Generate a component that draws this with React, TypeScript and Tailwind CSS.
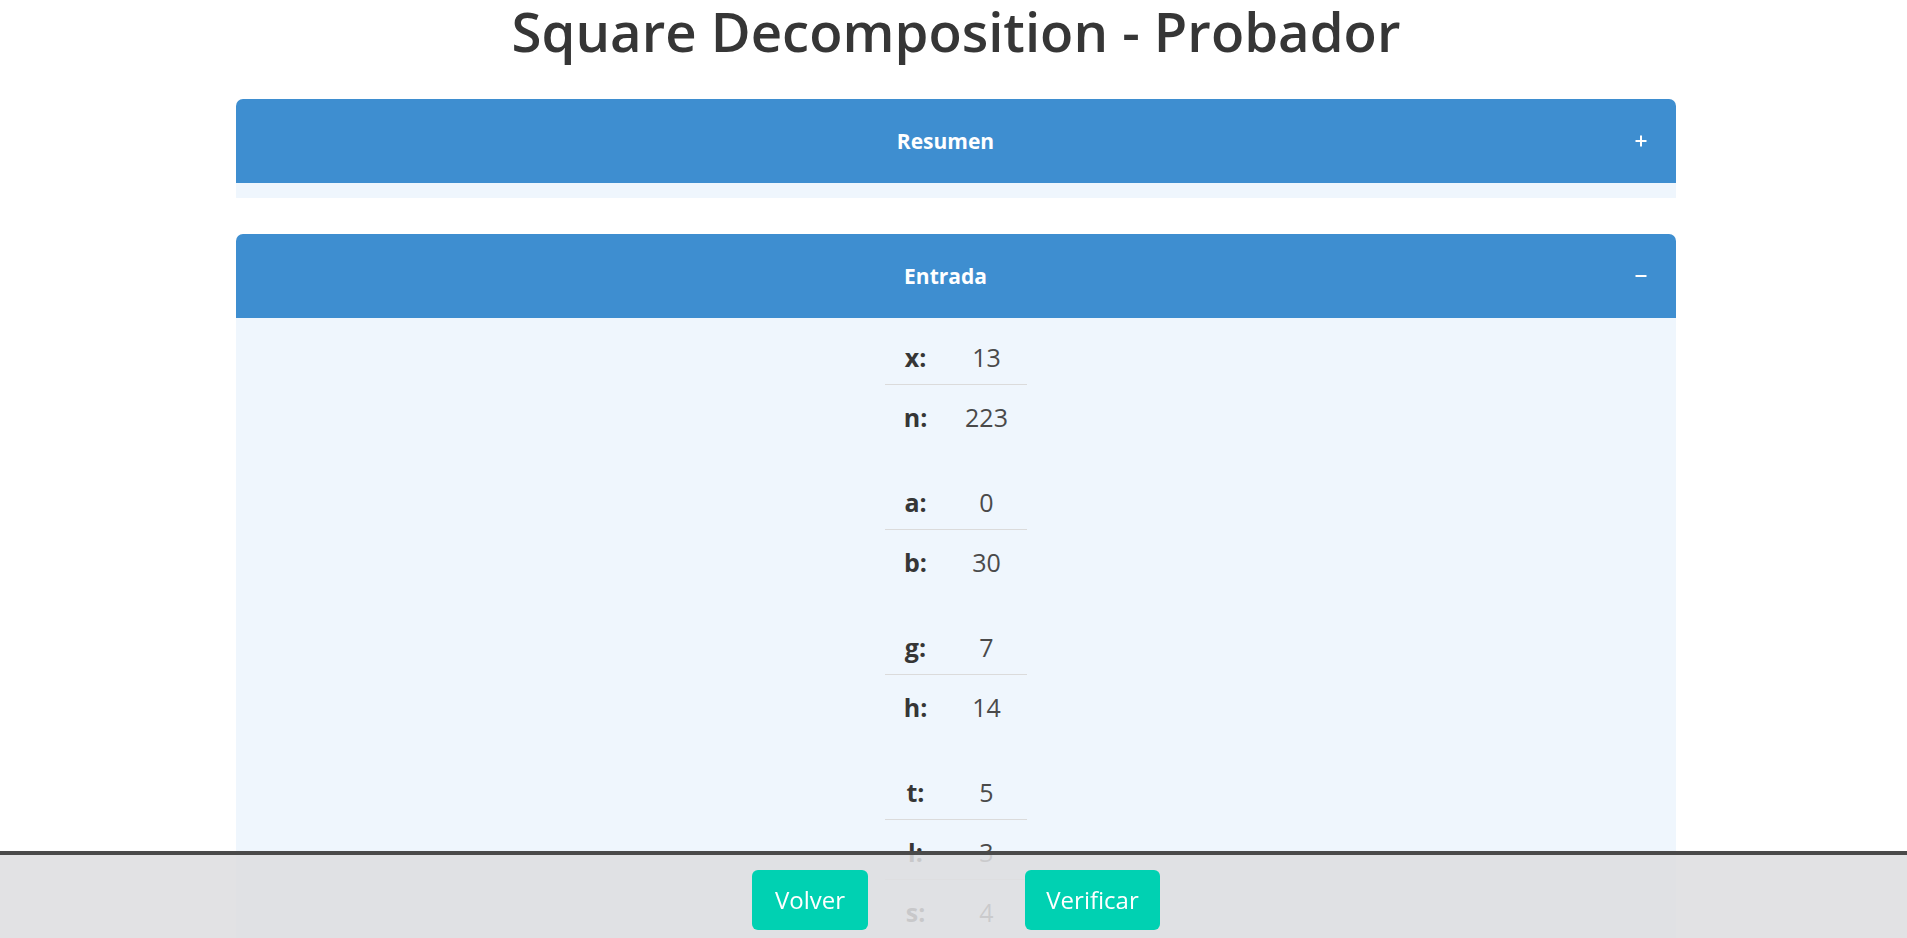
import React from 'react';

const groups: [string, string][][] = [
  [['x', '13'], ['n', '223']],
  [['a', '0'], ['b', '30']],
  [['g', '7'], ['h', '14']],
  [['t', '5'], ['l', '3'], ['s', '4']],
];

function PlusIcon() {
  return (
    <svg width="12" height="12" viewBox="0 0 12 12">
      <path d="M6 0.5v11M0.5 6h11" stroke="#fff" strokeWidth="2" />
    </svg>
  );
}

function MinusIcon() {
  return (
    <svg width="12" height="12" viewBox="0 0 12 12">
      <path d="M0.5 6h11" stroke="#fff" strokeWidth="2" />
    </svg>
  );
}

function PanelHeading({ title, open }: { title: string; open: boolean }) {
  return (
    <div className="flex items-center h-[84px] bg-[#3e8ed0] rounded-t-[7px] text-white font-bold text-[21px] pl-[20px] pr-[29px]">
      <span className="flex-1 text-center pt-[2px]">{title}</span>
      <span className="w-[12px] flex items-center justify-center">
        {open ? <MinusIcon /> : <PlusIcon />}
      </span>
    </div>
  );
}

export default function App() {
  return (
    <div className="h-screen overflow-hidden bg-white text-[#363636] font-['Open_Sans',sans-serif]">
      <div className="flex flex-col items-center pl-[5px]">
        <h1 className="mt-[-6px] h-[105px] text-[54.5px] leading-[74px] font-semibold text-[#363636]">
          Square Decomposition - Probador
        </h1>

        <div className="w-[1440px] flex flex-col gap-[36px]">
          {/* Resumen, collapsed */}
          <div>
            <PanelHeading title="Resumen" open={false} />
            <div className="h-[15px] bg-[#eff6fd]" />
          </div>

          {/* Entrada, open */}
          <div>
            <PanelHeading title="Entrada" open={true} />
            <div className="bg-[#eff6fd] pt-[7px] pb-[40px] flex flex-col items-center gap-[25px]">
              {groups.map((g, gi) => (
                <div key={gi} className="grid grid-cols-[61px_81px] text-[25px]">
                  {g.map(([k, v], ri) => {
                    const border = ri < g.length - 1 ? 'border-b border-[#dbdbdb]' : '';
                    return (
                      <React.Fragment key={k}>
                        <div className={`h-[60px] pt-[6px] flex items-center justify-center font-bold text-[#363636] ${border}`}>
                          {k}:
                        </div>
                        <div className={`h-[60px] pt-[6px] flex items-center justify-center text-[#4a4a4a] ${border}`}>
                          {v}
                        </div>
                      </React.Fragment>
                    );
                  })}
                </div>
              ))}
            </div>
          </div>
        </div>
      </div>

      {/* footer bar */}
      <div className="fixed bottom-0 inset-x-0 h-[87px] border-t-4 border-[#4a4a4a] bg-[rgba(222,222,224,0.87)] flex justify-center gap-[157px] pt-[15px] pl-[5px]">
        <button className="h-[60px] w-[116px] rounded-[6px] bg-[#00d1b2] text-white text-[24px]">
          Volver
        </button>
        <button className="h-[60px] w-[135px] rounded-[6px] bg-[#00d1b2] text-white text-[24px]">
          Verificar
        </button>
      </div>
    </div>
  );
}
